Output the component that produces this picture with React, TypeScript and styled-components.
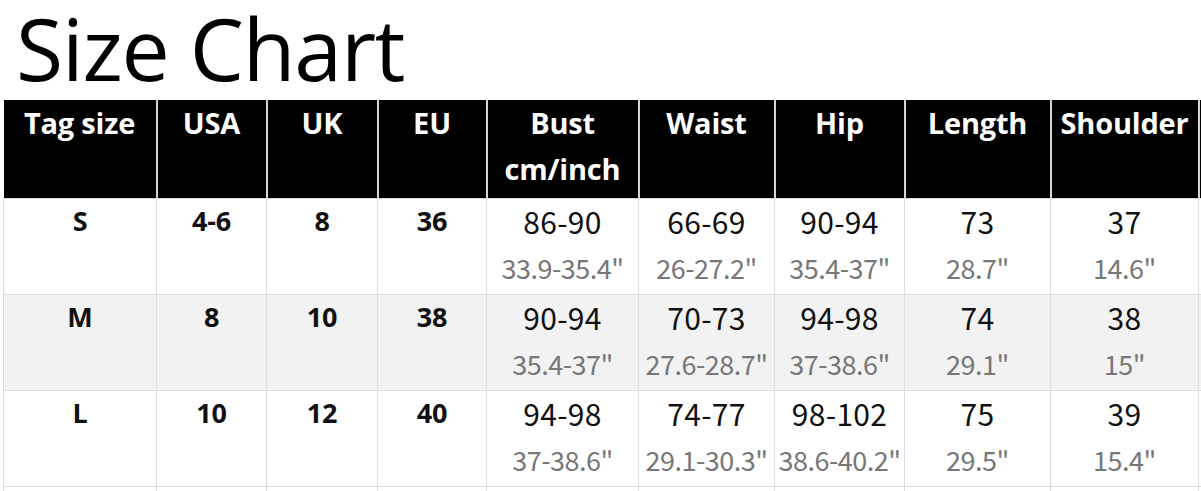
import React from "react";
import styled, { createGlobalStyle } from "styled-components";

const Global = createGlobalStyle`
  html, body { margin: 0; padding: 0; background: #fff; }
  body { width: 1201px; height: 491px; overflow: hidden; }
`;

const Page = styled.div`
  width: 1201px;
  height: 491px;
  overflow: hidden;
  background: #fff;
  display: flex;
  flex-direction: column;
`;

const Title = styled.h1`
  flex: 0 0 auto;
  margin: -2px 0 0;
  padding: 0 0 2px 16px;
  font-family: "Open Sans", "Noto Sans", sans-serif;
  font-weight: 400;
  font-size: 86px;
  line-height: 100px;
  color: #000;
  letter-spacing: -1.2px;
`;

const Table = styled.table`
  flex: 0 0 auto;
  border-collapse: collapse;
  table-layout: fixed;
  margin-left: 3px;
  width: 1350px;
`;

const HeadCell = styled.th`
  background: #000;
  color: #fff;
  font-family: "Open Sans", "Noto Sans", sans-serif;
  font-weight: 700;
  font-size: 29px;
  line-height: 46px;
  height: 98px;
  padding: 0;
  vertical-align: top;
  text-align: center;
  border-left: 2px solid #d4d4d4;
  letter-spacing: -0.2px;
  &:first-child { border-left: none; }
`;

const Row = styled.tr<{ $shade?: boolean }>`
  background: ${(p) => (p.$shade ? "#f2f2f2" : "#fff")};
`;

const Cell = styled.td`
  border: 1px solid #dcdcdc;
  height: 95px;
  padding: 0;
  vertical-align: top;
  text-align: center;
`;

const Label = styled.div`
  font-family: "Open Sans", "Noto Sans", sans-serif;
  font-weight: 700;
  font-size: 27px;
  line-height: 44px;
  color: #111;
  letter-spacing: -0.2px;
`;

const Primary = styled.div`
  font-family: "Noto Sans CJK SC", "Noto Sans", sans-serif;
  font-weight: 400;
  font-size: 30px;
  line-height: 44px;
  color: #111;
  letter-spacing: 0.3px;
`;

const Secondary = styled.div`
  font-family: "Noto Sans CJK SC", "Noto Sans", sans-serif;
  font-weight: 400;
  font-size: 27px;
  line-height: 50px;
  color: #777;
  letter-spacing: -0.5px;
`;

const widths = [153, 110, 111, 109, 152, 136, 130, 146, 148, 200];
const headers = ["Tag size", "USA", "UK", "EU", "Bust\ncm/inch", "Waist", "Hip", "Length", "Shoulder", ""];

type RowData = {
  tag: string;
  usa: string;
  uk: string;
  eu: string;
  m: [string, string][];
};

const rows: RowData[] = [
  {
    tag: "S", usa: "4-6", uk: "8", eu: "36",
    m: [["86-90", "33.9-35.4\""], ["66-69", "26-27.2\""], ["90-94", "35.4-37\""], ["73", "28.7\""], ["37", "14.6\""]],
  },
  {
    tag: "M", usa: "8", uk: "10", eu: "38",
    m: [["90-94", "35.4-37\""], ["70-73", "27.6-28.7\""], ["94-98", "37-38.6\""], ["74", "29.1\""], ["38", "15\""]],
  },
  {
    tag: "L", usa: "10", uk: "12", eu: "40",
    m: [["94-98", "37-38.6\""], ["74-77", "29.1-30.3\""], ["98-102", "38.6-40.2\""], ["75", "29.5\""], ["39", "15.4\""]],
  },
];

export default function App() {
  return (
    <Page>
      <Global />
      <Title>Size Chart</Title>
      <Table>
        <colgroup>
          {widths.map((w, i) => (
            <col key={i} style={{ width: w }} />
          ))}
        </colgroup>
        <thead>
          <tr>
            {headers.map((h, i) => (
              <HeadCell key={i}>
                {h.split("\n").map((line, j) => (
                  <div key={j}>{line}</div>
                ))}
              </HeadCell>
            ))}
          </tr>
        </thead>
        <tbody>
          {rows.map((r, i) => (
            <Row key={r.tag} $shade={i === 1}>
              {[r.tag, r.usa, r.uk, r.eu].map((v, j) => (
                <Cell key={j}>
                  <Label>{v}</Label>
                </Cell>
              ))}
              {r.m.map(([a, b], j) => (
                <Cell key={"m" + j}>
                  <Primary>{a}</Primary>
                  <Secondary>{b}</Secondary>
                </Cell>
              ))}
              <Cell />
            </Row>
          ))}
          <Row>
            {widths.map((_, j) => (
              <Cell key={j} />
            ))}
          </Row>
        </tbody>
      </Table>
    </Page>
  );
}
